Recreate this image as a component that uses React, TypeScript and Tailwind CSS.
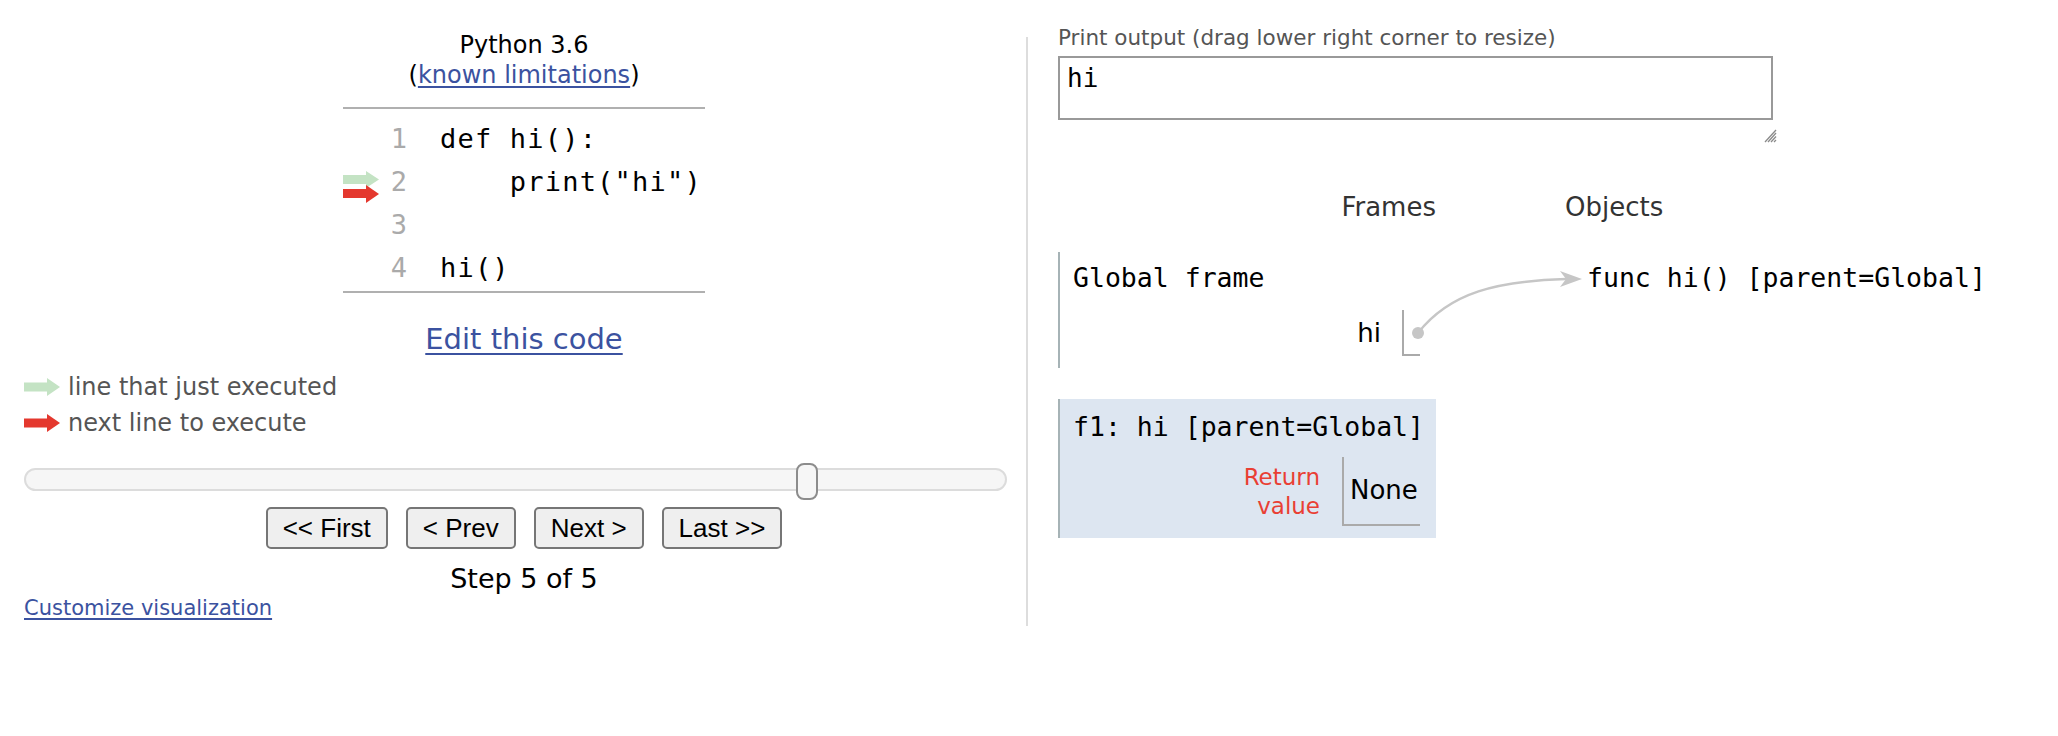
import React from 'react';

const sans = { fontFamily: '"DejaVu Sans", Verdana, sans-serif' };

const codeLines = [
  { n: 1, text: 'def hi():' },
  { n: 2, text: '    print("hi")' },
  { n: 3, text: '' },
  { n: 4, text: 'hi()' },
];

// green = line that just executed, red = next line to execute
const Arrow = ({ color }: { color: string }) => (
  <svg width="36" height="18" viewBox="0 0 36 18">
    <rect x="0" y="4.5" width="24" height="9" fill={color} />
    <polygon points="23,0 36,9 23,18" fill={color} />
  </svg>
);

const Button = ({ label }: { label: string }) => (
  <button className="h-[42px] rounded-[5px] border-2 border-[#767676] bg-[#efefef] px-[15px] font-['Liberation_Sans',Arial,sans-serif] text-[26px] leading-[30px] text-black">
    {label}
  </button>
);

export default function App() {
  return (
    <div className="flex items-start bg-white font-['DejaVu_Sans',Verdana,sans-serif] text-black" style={sans}>
      {/* Left pane: code + controls */}
      <div className="w-[1026px] shrink-0 pl-[24px] pr-[2px] pt-[30px]">
        <div className="text-center text-[24px] leading-[30px]">
          <div>Python 3.6</div>
          <div>
            (<a className="text-[#3b52a0] underline underline-offset-[3px]">known limitations</a>)
          </div>
        </div>

        <div className="mx-auto mt-[17px] w-[362px] border-y-2 border-[#b0b0b0] pt-[9px] pb-[1px] font-['DejaVu_Sans_Mono',Menlo,monospace] text-[27px] tracking-[1.2px]">
          {codeLines.map(line => (
            <div key={line.n} className="flex h-[43px] items-center">
              <div className="flex w-[42px] items-center">
                {line.n === 2 && (
                  <svg width="36" height="32" viewBox="0 0 36 32" className="mt-[8px]">
                    <rect x="0" y="4" width="24" height="9" fill="#c4e3c4" />
                    <polygon points="23,0 36,8.5 23,17" fill="#c4e3c4" />
                    <rect x="0" y="18" width="24" height="9" fill="#e4382e" />
                    <polygon points="23,14 36,23 23,32" fill="#e4382e" />
                  </svg>
                )}
              </div>
              <div className="w-[22px] text-right tracking-normal text-[#aaa]">{line.n}</div>
              <div className="whitespace-pre pl-[33px]">{line.text}</div>
            </div>
          ))}
        </div>

        <div className="mt-[28px] text-center text-[29px] leading-[36px]">
          <a className="text-[#3b52a0] underline underline-offset-[4px]">Edit this code</a>
        </div>

        <div className="mt-[12px] text-[24px] leading-[36px] text-[#555]">
          <div className="flex items-center gap-[8px]">
            <Arrow color="#c4e3c4" />
            <span>line that just executed</span>
          </div>
          <div className="flex items-center gap-[8px]">
            <Arrow color="#e4382e" />
            <span>next line to execute</span>
          </div>
        </div>

        <div className="relative mt-[22px] h-[37px] w-[983px]">
          <div className="absolute left-0 right-0 top-[5px] h-[23px] rounded-full border-2 border-[#dcdcdc] bg-[#f6f6f6]" />
          <div className="absolute left-[772px] top-0 h-[37px] w-[22px] rounded-[8px] border-2 border-[#8c8c8c] bg-[#f6f6f6]" />
        </div>

        <div className="mt-[7px] flex justify-center gap-[18px]">
          <Button label="<< First" />
          <Button label="< Prev" />
          <Button label="Next >" />
          <Button label="Last >>" />
        </div>

        <div className="mt-[14px] text-center text-[27px] leading-[32px]">Step 5 of 5</div>
        <div className="text-[21px] leading-[26px]">
          <a className="text-[#3b52a0] underline underline-offset-[3px]">Customize visualization</a>
        </div>
      </div>

      {/* Divider */}
      <div className="mt-[37px] h-[589px] w-[2px] shrink-0 bg-[#dddddd]" />

      {/* Right pane: output + frames/objects */}
      <div className="pl-[30px] pt-[25px]">
        <div className="text-[21.5px] leading-[26px] text-[#555]">Print output (drag lower right corner to resize)</div>
        <div className="mt-[5px] h-[64px] w-[715px] border-2 border-[#999] pl-[7px] pt-[5px] font-['DejaVu_Sans_Mono',Menlo,monospace] text-[26px] leading-[30px]">
          hi
        </div>
        <div className="mt-[8px] flex w-[719px] justify-end">
          <svg width="14" height="15" viewBox="0 0 14 15">
            <g stroke="#8a8a8a" strokeWidth="1.3">
              <line x1="2" y1="14" x2="13" y2="2" />
              <line x1="5" y1="14" x2="13" y2="5" />
              <line x1="8" y1="14" x2="13" y2="8.5" />
              <line x1="11" y1="14" x2="13" y2="12" />
            </g>
          </svg>
        </div>

        <div className="relative mt-[49px]">
          <div className="flex">
            {/* Frames column */}
            <div className="w-[378px]">
              <div className="text-right text-[26px] leading-[30px] text-[#333]">Frames</div>

              <div className="mt-[30px] border-l-2 border-[#a6b3b6] pb-[12px] pl-[13px] pt-[11px]">
                <div className="font-['DejaVu_Sans_Mono',Menlo,monospace] text-[26.5px] leading-[30px]">Global frame</div>
                <div className="mt-[17px] flex items-center justify-end pr-[16px]">
                  <div className="text-[26px] leading-[30px]">hi</div>
                  <div className="ml-[21px] h-[46px] w-[18px] border-b-2 border-l-2 border-[#aaa]" />
                </div>
              </div>

              <div className="mt-[31px] border-l-2 border-[#a6b3b6] bg-[#dde6f1] pb-[12px] pl-[13px] pt-[13px]">
                <div className="font-['DejaVu_Sans_Mono',Menlo,monospace] text-[26.5px] leading-[30px]">f1: hi [parent=Global]</div>
                <div className="mt-[15px] flex items-center justify-end pr-[16px]">
                  <div className="text-right text-[23px] leading-[29px] text-[#e93f34]">
                    Return
                    <br />
                    value
                  </div>
                  <div className="ml-[22px] flex h-[69px] w-[78px] items-center border-b-2 border-l-2 border-[#aaa] pl-[6px] text-[26px]">
                    None
                  </div>
                </div>
              </div>
            </div>

            {/* Objects column */}
            <div className="ml-[129px]">
              <div className="text-[26px] leading-[30px] text-[#333]">Objects</div>
              <div className="ml-[22px] mt-[41px] whitespace-pre font-['DejaVu_Sans_Mono',Menlo,monospace] text-[26.5px] leading-[30px]">
                func hi() [parent=Global]
              </div>
            </div>
          </div>

          {/* pointer from hi to the function object */}
          <svg className="pointer-events-none absolute left-0 top-0" width="600" height="200">
            <path d="M360 141 C 392 100, 440 89, 508 87" fill="none" stroke="#c6c6c6" strokeWidth="2.5" />
            <polygon points="524,87 502,79 508,87 502,95" fill="#c6c6c6" />
            <circle cx="360" cy="141" r="6" fill="#c6c6c6" />
          </svg>
        </div>
      </div>
    </div>
  );
}
